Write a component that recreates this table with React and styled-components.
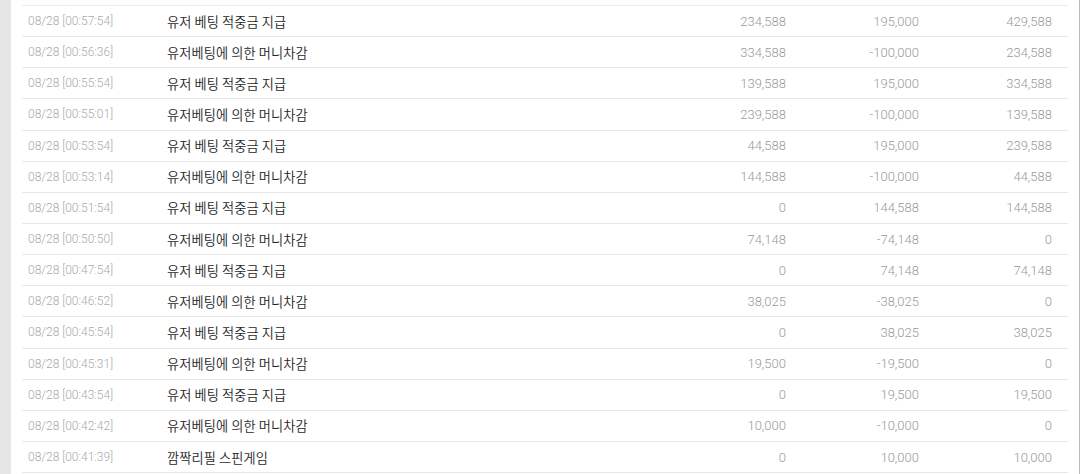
import styled, { createGlobalStyle } from "styled-components";

const rows = [
  ["08/28 [00:57:54]", "유저 베팅 적중금 지급", "234,588", "195,000", "429,588"],
  ["08/28 [00:56:36]", "유저베팅에 의한 머니차감", "334,588", "-100,000", "234,588"],
  ["08/28 [00:55:54]", "유저 베팅 적중금 지급", "139,588", "195,000", "334,588"],
  ["08/28 [00:55:01]", "유저베팅에 의한 머니차감", "239,588", "-100,000", "139,588"],
  ["08/28 [00:53:54]", "유저 베팅 적중금 지급", "44,588", "195,000", "239,588"],
  ["08/28 [00:53:14]", "유저베팅에 의한 머니차감", "144,588", "-100,000", "44,588"],
  ["08/28 [00:51:54]", "유저 베팅 적중금 지급", "0", "144,588", "144,588"],
  ["08/28 [00:50:50]", "유저베팅에 의한 머니차감", "74,148", "-74,148", "0"],
  ["08/28 [00:47:54]", "유저 베팅 적중금 지급", "0", "74,148", "74,148"],
  ["08/28 [00:46:52]", "유저베팅에 의한 머니차감", "38,025", "-38,025", "0"],
  ["08/28 [00:45:54]", "유저 베팅 적중금 지급", "0", "38,025", "38,025"],
  ["08/28 [00:45:31]", "유저베팅에 의한 머니차감", "19,500", "-19,500", "0"],
  ["08/28 [00:43:54]", "유저 베팅 적중금 지급", "0", "19,500", "19,500"],
  ["08/28 [00:42:42]", "유저베팅에 의한 머니차감", "10,000", "-10,000", "0"],
  ["08/28 [00:41:39]", "깜짝리필 스핀게임", "0", "10,000", "10,000"],
];

const GlobalStyle = createGlobalStyle`
  html, body {
    margin: 0;
    padding: 0;
    background: #e6e6e6;
    overflow: hidden;
  }
`;

const Page = styled.div`
  height: 474px;
  display: flex;
`;

const Panel = styled.div`
  margin-left: 11px;
  width: 1048px;
  padding: 0 11px;
  background: #ffffff;
  border-right: 1px solid #b9b9b9;
  box-sizing: content-box;
`;

const Table = styled.div`
  margin-top: 5px;
  border-top: 1px solid #ececec;
`;

const Row = styled.div`
  display: grid;
  grid-template-columns: 138px 500px 133px 133px 133px;
  height: 30.15px;
  align-items: center;
  border-bottom: 1px solid #e8e8e8;
`;

const Cell = styled.div`
  padding: 0 7px;
  white-space: nowrap;
  font-family: Roboto, "Noto Sans CJK KR", sans-serif;
  font-weight: 300;
  color: #9a9a9a;
  font-size: 13px;
  text-align: ${(p) => (p.$num ? "right" : "left")};
`;

const DateCell = styled(Cell)`
  padding-left: 6px;
  font-size: 12px;
  color: #aaaaaa;
`;

const Desc = styled(Cell)`
  font-family: "Noto Sans CJK KR", sans-serif;
  font-weight: 350;
  color: #1e1e1e;
  font-size: 13.2px;
  letter-spacing: 0.1px;
`;

export default function App() {
  return (
    <Page>
      <GlobalStyle />
      <Panel>
        <Table>
          {rows.map((r, i) => (
            <Row key={i}>
              <DateCell>{r[0]}</DateCell>
              <Desc>{r[1]}</Desc>
              <Cell $num>{r[2]}</Cell>
              <Cell $num>{r[3]}</Cell>
              <Cell $num>{r[4]}</Cell>
            </Row>
          ))}
        </Table>
      </Panel>
    </Page>
  );
}
